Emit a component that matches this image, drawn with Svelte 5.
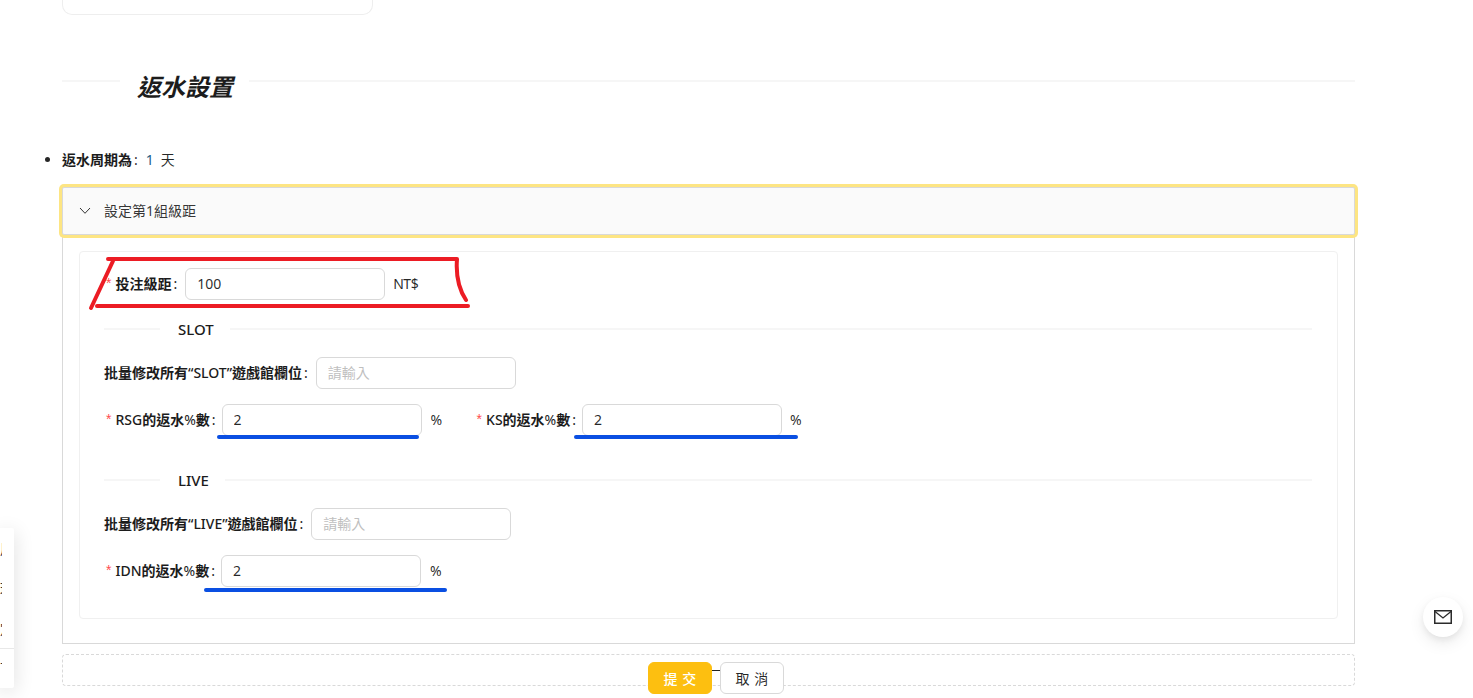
<script>
  const sections = [
    {
      name: 'SLOT',
      rows: [
        [
          { latin: 'RSG', value: '2' },
          { latin: 'KS', value: '2' }
        ]
      ]
    },
    {
      name: 'LIVE',
      rows: [[{ latin: 'IDN', value: '2' }]]
    }
  ];
</script>

<div class="screen">
  <main class="page">
    <div class="prev-card"></div>

    <div class="heading">
      <span class="rule short"></span>
      <h2>返水設置</h2>
      <span class="rule"></span>
    </div>

    <ul class="info">
      <li><b>返水周期為</b><span class="colon">:</span><span class="num">1</span><span>天</span></li>
    </ul>

    <section class="collapse">
      <header class="collapse-head">
        <svg class="chevron" viewBox="0 0 12 8" width="12" height="8" aria-hidden="true">
          <path d="M1 1 6 6.3 11 1" fill="none" stroke="#333" stroke-width="1" />
        </svg>
        <span class="head-text">設定第1組級距</span>
      </header>
      <div class="collapse-body">
        <div class="inner">
          <div class="row">
            <label class="field-label"><i>*</i>投注級距<span class="colon-l">:</span></label>
            <input class="input" value="100" />
            <span class="suffix nt">NT$</span>
          </div>

          {#each sections as s, si}
            <div class="divider" class:second={si === 1}>
              <span class="rule lead"></span>
              <span class="divider-text">{s.name}</span>
              <span class="rule"></span>
            </div>
            <div class="row bulk">
              <label class="field-label">批量修改所有<span class="latin">“{s.name}”</span>遊戲館欄位<span class="colon-l">:</span></label>
              <input class="input" placeholder="請輸入" />
            </div>
            {#each s.rows as r}
              <div class="row pair">
                {#each r as f}
                  <div class="field">
                    <label class="field-label"><i>*</i><span class="latin">{f.latin}</span>的返水<span class="pct">%</span>數<span class="colon-l">:</span></label>
                    <input class="input" value={f.value} />
                    <span class="suffix">%</span>
                  </div>
                {/each}
              </div>
            {/each}
          {/each}
        </div>
      </div>
    </section>

    <div class="dashed"></div>
  </main>

  <div class="footer-btns">
    <button class="btn primary">提交</button>
    <span class="dash"></span>
    <button class="btn">取消</button>
  </div>

  <aside class="side">
    <div class="side-item">用</div>
    <div class="side-item">理</div>
    <div class="side-item">定</div>
    <div class="side-sep"></div>
    <div class="side-item last">下</div>
  </aside>

  <div class="mail">
    <svg viewBox="0 0 18 14" width="18" height="14" aria-hidden="true">
      <rect x="0.75" y="0.75" width="16.5" height="12.5" fill="none" stroke="#2b2b2b" stroke-width="1.5" />
      <path d="M1 1.5 9 8l8-6.5" fill="none" stroke="#2b2b2b" stroke-width="1.3" />
    </svg>
  </div>

  <svg class="marks" width="1473" height="698" viewBox="0 0 1473 698" aria-hidden="true">
    <g fill="none" stroke="#ec1c24" stroke-width="4" stroke-linecap="round" stroke-linejoin="round">
      <path d="M91 308 113 261" />
      <path d="M108 259H457C456 272 458 288 466 300" />
      <path d="M97 306H468" />
    </g>
    <g fill="none" stroke="#0a4fe2" stroke-width="4" stroke-linecap="round">
      <path d="M219 437H417" />
      <path d="M576 437H796" />
      <path d="M206 590H445" />
    </g>
  </svg>
</div>

<style>
  :global(body) {
    margin: 0;
    background: #fff;
  }
  .screen {
    position: relative;
    width: 1473px;
    height: 698px;
    overflow: hidden;
    background: #fff;
    font-family: "Noto Sans", "Noto Sans CJK TC", sans-serif;
    font-size: 14px;
    color: rgba(0, 0, 0, 0.85);
  }
  .page {
    width: 1293px;
    margin-left: 62px;
  }
  .prev-card {
    width: 311px;
    height: 15px;
    box-sizing: border-box;
    border: 1px solid #eeeeee;
    border-top: 0;
    border-radius: 0 0 10px 10px;
  }
  .heading {
    display: flex;
    align-items: flex-start;
    height: 36px;
    margin-top: 54px;
  }
  .heading h2 {
    margin: 0;
    padding: 0 16px 0 17px;
    font-size: 24px;
    line-height: 36px;
    font-weight: 700;
    font-style: italic;
    color: #1c1c1c;
    white-space: nowrap;
  }
  .rule {
    flex: 1;
    height: 2px;
    background: #f6f6f6;
    margin-top: 11px;
  }
  .rule.short {
    flex: 0 0 58px;
  }
  .info {
    margin: 0;
    padding: 0;
    margin-top: 44px;
    list-style: disc;
    line-height: 22px;
    height: 22px;
  }
  .info b {
    font-weight: 700;
    color: #1c1c1c;
    font-size: 14px;
  }
  .colon {
    margin: 0 8px 0 2px;
  }
  .num {
    color: #1b5c86;
    margin-right: 7px;
  }
  .collapse {
    margin-top: 16px;
  }
  .collapse-head {
    display: flex;
    align-items: center;
    height: 48px;
    box-sizing: border-box;
    border: 1px solid #d9d9d9;
    background: #fafafa;
    box-shadow: 0 0 0 3px #fde583;
    border-radius: 2px;
    padding-left: 16px;
    color: rgba(0, 0, 0, 0.8);
    position: relative;
  }
  .head-text {
    padding-bottom: 2px;
  }
  .chevron {
    margin-right: 13px;
    flex: none;
  }
  .collapse-body {
    box-sizing: border-box;
    height: 409px;
    padding: 16px;
    border: 1px solid #d9d9d9;
    border-top: 0;
  }
  .inner {
    box-sizing: border-box;
    height: 368px;
    padding: 16px 25px 0 24px;
    border: 1px solid #f0f0f0;
    border-radius: 4px;
  }
  .row {
    display: flex;
    align-items: center;
    height: 32px;
  }
  .field {
    display: flex;
    align-items: center;
  }
  .field + .field {
    margin-left: 33px;
  }
  .field-label {
    font-weight: 700;
    color: #1c1c1c;
    white-space: nowrap;
    display: flex;
    align-items: center;
    padding-bottom: 2px;
  }
  .field-label i {
    font-style: normal;
    font-weight: 400;
    color: #ff4d4f;
    font-family: "Liberation Sans", sans-serif;
    margin: 0 4px 0 2px;
  }
  .latin {
    font-weight: 500;
  }
  .pct {
    font-weight: 400;
  }
  .colon-l {
    margin: 0 8px 0 2px;
    font-weight: 400;
  }
  .field .colon-l {
    margin-right: 6px;
  }
  .input {
    box-sizing: border-box;
    width: 200px;
    height: 32px;
    padding: 0 11px 2px;
    border: 1px solid #d9d9d9;
    border-radius: 6px;
    background: #fff;
    font: inherit;
    color: rgba(0, 0, 0, 0.85);
    outline: none;
  }
  .input::placeholder {
    color: #bfbfbf;
  }
  .suffix {
    margin-left: 9px;
    width: 11px;
    white-space: nowrap;
    padding-bottom: 2px;
  }
  .field + .field .suffix {
    margin-left: 8px;
  }
  .nt {
    margin-left: 8px;
    letter-spacing: -0.5px;
  }
  .divider {
    display: flex;
    align-items: flex-start;
    height: 22px;
    margin-top: 18px;
  }
  .divider.second {
    margin-top: 33px;
  }
  .divider .rule {
    margin-top: 10px;
  }
  .divider .lead {
    flex: 0 0 56px;
  }
  .divider-text {
    padding: 0 16px 0 18px;
    font-weight: 500;
    font-size: 15px;
    line-height: 22px;
    color: #1c1c1c;
  }
  .bulk {
    margin-top: 17px;
  }
  .pair {
    margin-top: 15px;
  }
  .dashed {
    height: 32px;
    box-sizing: border-box;
    margin-top: 10px;
    border: 1px dashed #d9d9d9;
    border-radius: 4px;
  }
  .footer-btns {
    position: absolute;
    left: 648px;
    top: 662px;
    display: flex;
    align-items: flex-start;
  }
  .btn {
    box-sizing: border-box;
    width: 64px;
    height: 32px;
    padding: 0;
    border: 1px solid #d9d9d9;
    border-radius: 6px;
    background: #fff;
    color: rgba(0, 0, 0, 0.85);
    font: inherit;
    letter-spacing: 0.34em;
    text-indent: 0.34em;
  }
  .btn.primary {
    border-color: #fdbf10;
    background: #fdbf10;
    color: #fff;
    font-weight: 500;
  }
  .dash {
    width: 8px;
    height: 1px;
    margin-top: 8px;
    background: #222;
  }
  .side {
    position: absolute;
    left: 0;
    top: 528px;
    width: 14px;
    height: 160px;
    background: #fff;
    box-shadow: 0 4px 20px rgba(0, 0, 0, 0.14);
    overflow: hidden;
    border-radius: 0 2px 2px 0;
  }
  .side-item {
    height: 40px;
    display: flex;
    align-items: center;
    justify-content: flex-end;
    width: 2px;
    overflow: hidden;
    direction: rtl;
    font-size: 14px;
    color: #333;
  }
  .side-sep {
    height: 1px;
    background: #e8e8e8;
  }
  .side-item.last {
    height: 38px;
  }
  .mail {
    position: absolute;
    left: 1423px;
    top: 597px;
    width: 40px;
    height: 40px;
    border-radius: 50%;
    background: #fff;
    box-shadow: 0 6px 16px rgba(0, 0, 0, 0.08), 0 3px 6px rgba(0, 0, 0, 0.06);
    display: flex;
    align-items: center;
    justify-content: center;
  }
  .marks {
    position: absolute;
    left: 0;
    top: 0;
    pointer-events: none;
  }
</style>
